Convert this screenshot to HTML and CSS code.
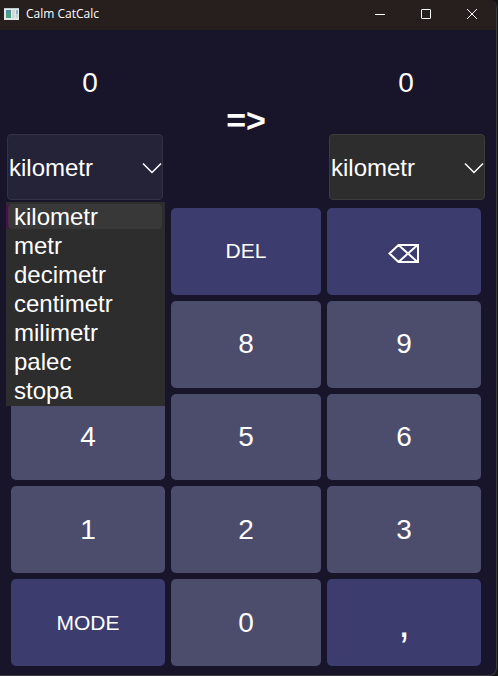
FILE: index.html
```html
<!DOCTYPE html>
<html lang="pl">
<head>
<meta charset="utf-8">
<meta name="viewport" content="width=device-width, initial-scale=1">
<title>Calm CatCalc</title>
<link rel="stylesheet" href="styles.css">
</head>
<body>
<div class="window">
  <header class="titlebar">
    <svg class="app-icon" width="15" height="12" viewBox="0 0 15 12" aria-hidden="true">
      <rect width="15" height="12" fill="#e4e9e8"/>
      <rect y="0" width="15" height="1" fill="#bccfd2"/>
      <rect x="2" y="2" width="5" height="8" fill="#4e8fa0"/>
      <path d="M2 10V6l5-2v6z" fill="#48a184"/>
      <rect x="8" y="2" width="3" height="8" fill="#d5d6d8"/>
      <rect x="12" y="2" width="2" height="4" fill="#91b2cb"/>
      <rect x="12" y="6" width="2" height="4" fill="#bddad0"/>
    </svg>
    <h1 class="title">Calm CatCalc</h1>
    <div class="window-controls">
      <button type="button" class="control" aria-label="Minimize"><svg width="10" height="10" viewBox="0 0 10 10"><path d="M0 5.500h10"/></svg></button>
      <button type="button" class="control" aria-label="Maximize"><svg width="10" height="10" viewBox="0 0 10 10"><rect x=".5" y=".5" width="9" height="9" rx=".5"/></svg></button>
      <button type="button" class="control" aria-label="Close"><svg width="10" height="10" viewBox="0 0 10 10"><path d="M0 0l10 10M10 0L0 10"/></svg></button>
    </div>
  </header>

  <main class="app">
    <section class="converter">
      <div class="side">
        <output class="value">0</output>
        <div class="unit unit-open">
          <select class="unit-select" aria-label="From unit">
            <option selected>kilometr</option><option>metr</option><option>decimetr</option><option>centimetr</option><option>milimetr</option><option>palec</option><option>stopa</option>
          </select>
          <svg class="chevron" width="20" height="12" viewBox="0 0 20 12" aria-hidden="true"><path d="M1 1.500l9 9 9-9"/></svg>
          <ul class="menu" role="listbox" aria-label="Units">
            <li class="menu-item menu-item-active" role="option" aria-selected="true">kilometr</li>
            <li class="menu-item" role="option">metr</li>
            <li class="menu-item" role="option">decimetr</li>
            <li class="menu-item" role="option">centimetr</li>
            <li class="menu-item" role="option">milimetr</li>
            <li class="menu-item" role="option">palec</li>
            <li class="menu-item" role="option">stopa</li>
          </ul>
        </div>
      </div>
      <div class="arrow">=&gt;</div>
      <div class="side">
        <output class="value">0</output>
        <div class="unit">
          <select class="unit-select" aria-label="To unit">
            <option selected>kilometr</option><option>metr</option><option>decimetr</option><option>centimetr</option><option>milimetr</option><option>palec</option><option>stopa</option>
          </select>
          <svg class="chevron" width="20" height="12" viewBox="0 0 20 12" aria-hidden="true"><path d="M1 1.500l9 9 9-9"/></svg>
        </div>
      </div>
    </section>

    <section class="keypad" aria-label="Keypad">
      <button type="button" class="key key-action" aria-label="Clear"></button>
      <button type="button" class="key key-action">DEL</button>
      <button type="button" class="key key-action" aria-label="Backspace"><svg class="backspace" width="32" height="20" viewBox="0 0 32 20" aria-hidden="true"><path d="M10.500 1H30v17H10.500L1.500 9.500zM10.500 1L29.500 18M29.500 1L10.500 18"/></svg></button>
      <button type="button" class="key" aria-label="7"></button>
      <button type="button" class="key">8</button>
      <button type="button" class="key">9</button>
      <button type="button" class="key">4</button>
      <button type="button" class="key">5</button>
      <button type="button" class="key">6</button>
      <button type="button" class="key">1</button>
      <button type="button" class="key">2</button>
      <button type="button" class="key">3</button>
      <button type="button" class="key key-action">MODE</button>
      <button type="button" class="key">0</button>
      <button type="button" class="key key-action key-comma">,</button>
    </section>
  </main>
</div>
</body>
</html>
```
FILE: styles.css
```css
* {
  box-sizing: border-box;
}

body {
  margin: 0;
  background: #161616;
  color: #fff;
  font-family: "Liberation Sans", Arial, sans-serif;
}

.window {
  display: flex;
  flex-direction: column;
  min-height: 100vh;
  margin-right: 1px;
  border-right: 1px solid #3d3d3f;
  border-bottom: 1px solid #3d3d3f;
  border-radius: 0 8px 8px 0;
  background: #18152b;
  overflow: hidden;
}

.titlebar {
  display: flex;
  align-items: center;
  height: 30px;
  padding: 0 1px 2px 4px;
  background: #271e1e;
}

.title {
  margin: 0 0 0 7px;
  font: 12px/16px "Open Sans", "Segoe UI", sans-serif;
}

.window-controls {
  display: flex;
  margin-left: auto;
}

.control {
  display: flex;
  align-items: center;
  justify-content: center;
  width: 46px;
  height: 28px;
  padding: 0;
  border: 0;
  background: none;
}

.control svg {
  fill: none;
  stroke: #fff;
}

.app {
  display: flex;
  flex: 1;
  flex-direction: column;
}

.converter {
  display: grid;
  grid-template-columns: 1fr 1fr 1fr;
  gap: 5px;
  padding: 0 11px 0 7px;
}

.side {
  display: flex;
  flex-direction: column;
}

.value {
  height: 104px;
  font-size: 28px;
  line-height: 106px;
  text-align: center;
}

.side:first-child .value {
  padding-left: 10px;
}

.side:last-child .value {
  padding-right: 2px;
}

.unit {
  position: relative;
}

.unit-select {
  display: block;
  width: 100%;
  height: 66px;
  padding: 0 24px 0 1px;
  border: 1px solid #3c3c3c;
  border-radius: 4px;
  appearance: none;
  background: #2d2d2d;
  color: #fff;
  font: 24px "Liberation Sans", Arial, sans-serif;
}

.unit-open .unit-select {
  border-color: #343147;
  background: #252338;
}

.chevron {
  position: absolute;
  top: 28px;
  right: 1px;
  fill: none;
  stroke: #fff;
  stroke-width: 1.5;
  pointer-events: none;
}

.menu {
  position: absolute;
  top: 68px;
  right: -2px;
  left: -1px;
  z-index: 1;
  margin: 0;
  padding: 0 3px 1px 2px;
  background: #2d2d2d;
  list-style: none;
}

.menu-item {
  padding-left: 6px;
  font-size: 24px;
  line-height: 29px;
}

.menu-item-active {
  position: relative;
  border-left: 0;
}

.menu-item-active::before {
  position: absolute;
  inset: 2px 0;
  z-index: -1;
  border-radius: 4px;
  background: #383838;
  box-shadow: -2px 0 #4d0b58;
  content: "";
}

.arrow {
  padding-top: 70px;
  font-size: 34px;
  font-weight: bold;
  line-height: 40px;
  text-align: center;
}

.keypad {
  display: grid;
  flex: 1;
  grid-template-columns: 154fr 150fr 154fr;
  grid-auto-rows: 1fr;
  gap: 6px;
  padding: 8px 15px 9px 11px;
}

.key {
  display: flex;
  align-items: center;
  justify-content: center;
  min-height: 60px;
  padding: 0;
  border: 0;
  border-radius: 5px;
  background: #4c4c6d;
  color: #fff;
  font: 28px "Liberation Sans", Arial, sans-serif;
}

.key-action {
  background: #3c3c6e;
  font-size: 21px;
}

.key-comma {
  font-size: 42px;
}

.backspace {
  margin-top: 6px;
  fill: none;
  stroke: #fff;
  stroke-width: 2;
}
```
